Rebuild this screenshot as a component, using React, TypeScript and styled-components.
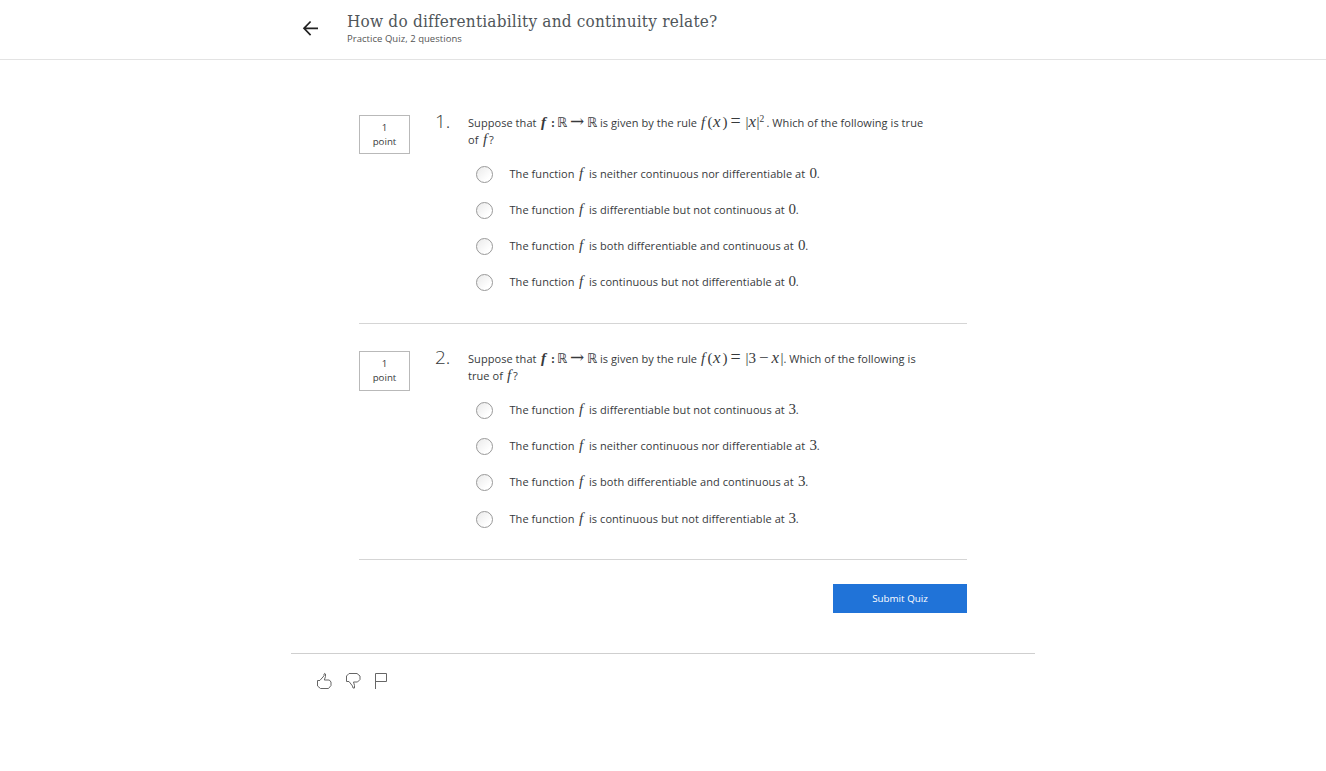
import React from 'react';
import styled, { createGlobalStyle } from 'styled-components';

const GlobalStyle = createGlobalStyle`
  * { box-sizing: border-box; }
  body { margin: 0; background: #fff; color: #373a3c; font-family: 'Open Sans', sans-serif; font-size: 11px; }
`;

const Page = styled.div`min-height: 771px;`;

const Header = styled.header`
  height: 60px;
  padding-left: 302px;
  display: flex;
  border-bottom: 1px solid #e3e3e3;
`;

const BackLink = styled.button`
  width: 17px;
  height: 16px;
  margin: 20px 28px 0 0;
  padding: 0;
  border: 0;
  background: none;
  svg { display: block; }
`;

const Titles = styled.div`padding-top: 11px;`;

const Title = styled.h1`
  margin: 0;
  font: 400 17px/21px 'DejaVu Serif', serif;
  font-stretch: condensed;
  letter-spacing: 0.22px;
  color: #50565a;
  white-space: nowrap;
`;

const Subtitle = styled.div`
  font-size: 9.5px;
  line-height: 13px;
  letter-spacing: 0.04px;
  color: #555;
`;

const Main = styled.main`
  width: 608px;
  margin: 28px 0 0 359px;
`;

const Question = styled.section`
  height: 236px;
  padding-top: 27px;
  display: flex;
  align-items: flex-start;
  border-bottom: 1px solid #d5d5d5;
`;

const Points = styled.div<{ $h: number }>`
  width: 51px;
  height: ${p => p.$h}px;
  padding-top: 5px;
  border: 1px solid #b9b9b9;
  font-size: 9.7px;
  line-height: 14px;
  text-align: center;
`;

const Ordinal = styled.div`
  width: 58px;
  margin-top: -7px;
  padding-left: 25px;
  font-size: 19px;
  font-weight: 300;
  line-height: 26px;
`;

const Body = styled.div`
  margin-top: -1px;
  letter-spacing: 0.06px;
`;

const Line = styled.div`
  display: flex;
  align-items: baseline;
  height: 17px;
  line-height: 17px;
  white-space: pre;
`;

const Words = styled.span<{ $w?: number }>`
  flex: none;
  width: ${p => (p.$w ? `${p.$w}px` : 'auto')};
`;

const Sym = styled.span<{ $w: number; $italic?: boolean; $bold?: boolean; $size?: number }>`
  flex: none;
  width: ${p => p.$w}px;
  font-family: 'Liberation Serif', serif;
  font-size: ${p => p.$size ?? 15}px;
  font-style: ${p => (p.$italic ? 'italic' : 'normal')};
  font-weight: ${p => (p.$bold ? 700 : 400)};
  line-height: 10px;
`;

const Blackboard = styled(Sym)`font-family: 'DejaVu Sans', sans-serif;`;
const Arrow = styled(Sym)`font-family: 'DejaVu Serif', serif;`;
const Power = styled(Sym)`align-self: flex-start;`;

const Options = styled.div<{ $step: number }>`
  margin-top: 8px;
  padding-left: 8px;
  > label { height: ${p => p.$step}px; }
`;

const Option = styled.label`
  display: flex;
  align-items: center;
  ${Line} { margin-top: -2px; }
`;

const Radio = styled.span`
  width: 17px;
  height: 17px;
  margin-right: 16.5px;
  border: 1px solid #999;
  border-radius: 50%;
  background: linear-gradient(135deg, #eaeaea, #fff 75%);
`;

const Submit = styled.button`
  display: block;
  width: 134px;
  height: 29px;
  margin: 24px 0 0 auto;
  padding: 0 0 1px;
  border: 0;
  background: #2073d8;
  color: #fff;
  font: 400 9.8px 'Open Sans', sans-serif;
`;

const Footer = styled.footer`
  width: 744px;
  margin: 40px 0 0 291px;
  padding: 18px 0 0 24px;
  border-top: 1px solid #cfcfcf;
  display: flex;
  gap: 11px;
  svg { display: block; }
`;

const Rule = ({ children }: { children: React.ReactNode }) => (
  <Line>
    <Words $w={73}>Suppose that</Words>
    <Sym $w={10} $italic $bold>f</Sym>
    <Sym $w={6} $bold $size={12}>:</Sym>
    <Blackboard $w={13} $size={13}>ℝ</Blackboard>
    <Arrow $w={17} $size={17}>→</Arrow>
    <Blackboard $w={13} $size={13}>ℝ</Blackboard>
    <Words $w={101}>is given by the rule</Words>
    <Sym $w={6.5} $italic>f</Sym>
    <Sym $w={5.5} $size={15}>(</Sym>
    <Sym $w={9.5} $italic $size={17}>x</Sym>
    <Sym $w={8} $size={15}>)</Sym>
    <Sym $w={15} $size={18}>=</Sym>
    {children}
  </Line>
);

const OptionRow = ({ verdict, width, at }: { verdict: string; width: number; at: string }) => (
  <Option>
    <Radio />
    <Line>
      <Words $w={69.5}>The function</Words>
      <Sym $w={10} $italic>f</Sym>
      <Words $w={width}>{`is ${verdict} at`}</Words>
      <Sym $w={7.2}>{at}</Sym>
      <Words>.</Words>
    </Line>
  </Option>
);

const NEITHER = { verdict: 'neither continuous nor differentiable', width: 220.5 };
const DIFFERENTIABLE = { verdict: 'differentiable but not continuous', width: 199.5 };
const BOTH = { verdict: 'both differentiable and continuous', width: 209 };
const CONTINUOUS = { verdict: 'continuous but not differentiable', width: 199.5 };

export default function App() {
  return (
    <Page>
      <GlobalStyle />
      <Header>
        <BackLink aria-label="Back">
          <svg width="17" height="16" viewBox="0 0 17 16" fill="none" stroke="#222" strokeWidth="1.7">
            <path d="M16 8.3H2M8.6 1.5L2 8.3l6.6 6.8" />
          </svg>
        </BackLink>
        <Titles>
          <Title>How do differentiability and continuity relate?</Title>
          <Subtitle>Practice Quiz, 2 questions</Subtitle>
        </Titles>
      </Header>
      <Main>
        <Question>
          <Points $h={39}>1<br />point</Points>
          <Ordinal>1.</Ordinal>
          <Body>
            <Rule>
              <Sym $w={3} $size={15}>|</Sym>
              <Sym $w={8} $italic $size={17}>x</Sym>
              <Sym $w={3} $size={15}>|</Sym>
              <Power $w={7} $size={9.5}>2</Power>
              <Words>. Which of the following is true</Words>
            </Rule>
            <Line><Words $w={15}>of</Words><Sym $w={6} $italic>f</Sym><Words>?</Words></Line>
            <Options $step={36.2}>
              <OptionRow {...NEITHER} at="0" />
              <OptionRow {...DIFFERENTIABLE} at="0" />
              <OptionRow {...BOTH} at="0" />
              <OptionRow {...CONTINUOUS} at="0" />
            </Options>
          </Body>
        </Question>
        <Question>
          <Points $h={40}>1<br />point</Points>
          <Ordinal>2.</Ordinal>
          <Body>
            <Rule>
              <Sym $w={3} $size={15}>|</Sym>
              <Sym $w={10.5}>3</Sym>
              <Sym $w={12.5} $size={17}>−</Sym>
              <Sym $w={9} $italic $size={17}>x</Sym>
              <Sym $w={3} $size={15}>|</Sym>
              <Words>. Which of the following is</Words>
            </Rule>
            <Line><Words $w={39}>true of</Words><Sym $w={6} $italic>f</Sym><Words>?</Words></Line>
            <Options $step={36.4}>
              <OptionRow {...DIFFERENTIABLE} at="3" />
              <OptionRow {...NEITHER} at="3" />
              <OptionRow {...BOTH} at="3" />
              <OptionRow {...CONTINUOUS} at="3" />
            </Options>
          </Body>
        </Question>
        <Submit>Submit Quiz</Submit>
      </Main>
      <Footer>
        <svg width="18" height="18" viewBox="0 0 18 18" fill="none" stroke="#666" strokeWidth="1" strokeLinejoin="round">
          <path d="M5 8.3L9 3.8V2q1-1.2 1.5 0v2.500L9.300 8h5l1.700 2v3.500L13.500 16.500h-8L2.500 14V8.500H5" />
        </svg>
        <svg width="18" height="18" viewBox="0 0 18 18" fill="none" stroke="#666" strokeWidth="1" strokeLinejoin="round">
          <path d="M2.500 9.500V4l2.500-2.500h8L16 4v3.500L13.500 10h-4l1 3.500V16H9l-.5-2L5 9.500z" />
        </svg>
        <svg width="18" height="18" viewBox="0 0 18 18" fill="none" stroke="#666" strokeWidth="1">
          <path d="M2.500 17V1.500h11v8h-11" />
        </svg>
      </Footer>
    </Page>
  );
}
